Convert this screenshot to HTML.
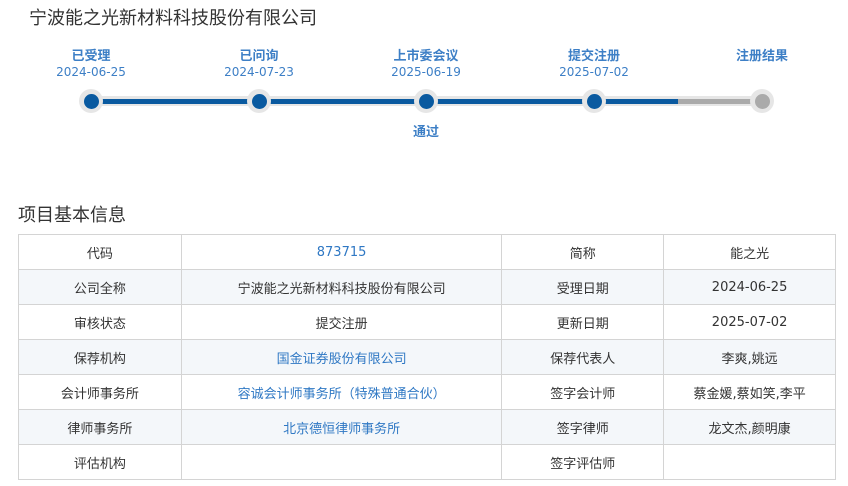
<!DOCTYPE html>
<html><head><meta charset="utf-8"><style>
body{margin:0;width:848px;height:486px;background:#fff;font-family:"DejaVu Sans","Noto Sans CJK SC",sans-serif;position:relative;overflow:hidden}
.a{position:absolute}
.t{left:29px;top:4px;font-size:18px;color:#333;font-family:"Liberation Sans","Noto Sans CJK SC",sans-serif}
.lb{font-size:13px;font-weight:bold;color:#3d7fc6;width:120px;text-align:center;top:45px;font-family:"Liberation Sans","Noto Sans CJK SC",sans-serif}
.dt{font-size:12px;color:#3d7fc6;width:120px;text-align:center;top:65px}
.halo{width:24px;height:24px;border-radius:50%;background:#e6e6e6;top:89px}
.dot{width:15px;height:15px;border-radius:50%;background:#0a5aa0;top:93.5px}
table{position:absolute;left:18px;top:234px;width:818px;border-collapse:collapse;font-size:13px;color:#333}
td{border:1px solid #d4d4d4;height:34px;text-align:center;padding:0}
tr:nth-child(even) td{background:#f4f7fa}
.bl{color:#2f78c4}
</style></head><body>
<div class="a t">宁波能之光新材料科技股份有限公司</div>
<div class="a" style="left:91px;top:96px;width:671px;height:10px;background:#e6e6e6"></div>
<div class="a" style="left:91px;top:98.5px;width:587px;height:5px;background:#0a5aa0"></div>
<div class="a" style="left:678px;top:98.5px;width:84px;height:5px;background:#aaa"></div>
<div class="a halo" style="left:79px"></div><div class="a dot" style="left:83.5px"></div>
<div class="a halo" style="left:247px"></div><div class="a dot" style="left:251.5px"></div>
<div class="a halo" style="left:414px"></div><div class="a dot" style="left:418.5px"></div>
<div class="a halo" style="left:582px"></div><div class="a dot" style="left:586.5px"></div>
<div class="a halo" style="left:750px"></div><div class="a dot" style="left:754.5px;background:#aaa"></div>
<div class="a lb" style="left:31px">已受理</div><div class="a dt" style="left:31px">2024-06-25</div>
<div class="a lb" style="left:199px">已问询</div><div class="a dt" style="left:199px">2024-07-23</div>
<div class="a lb" style="left:366px">上市委会议</div><div class="a dt" style="left:366px">2025-06-19</div>
<div class="a lb" style="left:534px">提交注册</div><div class="a dt" style="left:534px">2025-07-02</div>
<div class="a lb" style="left:702px">注册结果</div>
<div class="a lb" style="left:366px;top:121px">通过</div>
<div class="a" style="left:18px;top:201px;font-size:18px;color:#333;font-family:'Liberation Sans','Noto Sans CJK SC',sans-serif">项目基本信息</div>
<table>
<colgroup><col style="width:163px"><col style="width:321px"><col style="width:162px"><col style="width:172px"></colgroup>
<tr><td>代码</td><td class="bl">873715</td><td>简称</td><td>能之光</td></tr>
<tr><td>公司全称</td><td>宁波能之光新材料科技股份有限公司</td><td>受理日期</td><td>2024-06-25</td></tr>
<tr><td>审核状态</td><td>提交注册</td><td>更新日期</td><td>2025-07-02</td></tr>
<tr><td>保荐机构</td><td class="bl">国金证券股份有限公司</td><td>保荐代表人</td><td>李爽,姚远</td></tr>
<tr><td>会计师事务所</td><td class="bl">容诚会计师事务所（特殊普通合伙）</td><td>签字会计师</td><td>蔡金媛,蔡如笑,李平</td></tr>
<tr><td>律师事务所</td><td class="bl">北京德恒律师事务所</td><td>签字律师</td><td>龙文杰,颜明康</td></tr>
<tr><td>评估机构</td><td></td><td>签字评估师</td><td></td></tr>
</table>
</body></html>
